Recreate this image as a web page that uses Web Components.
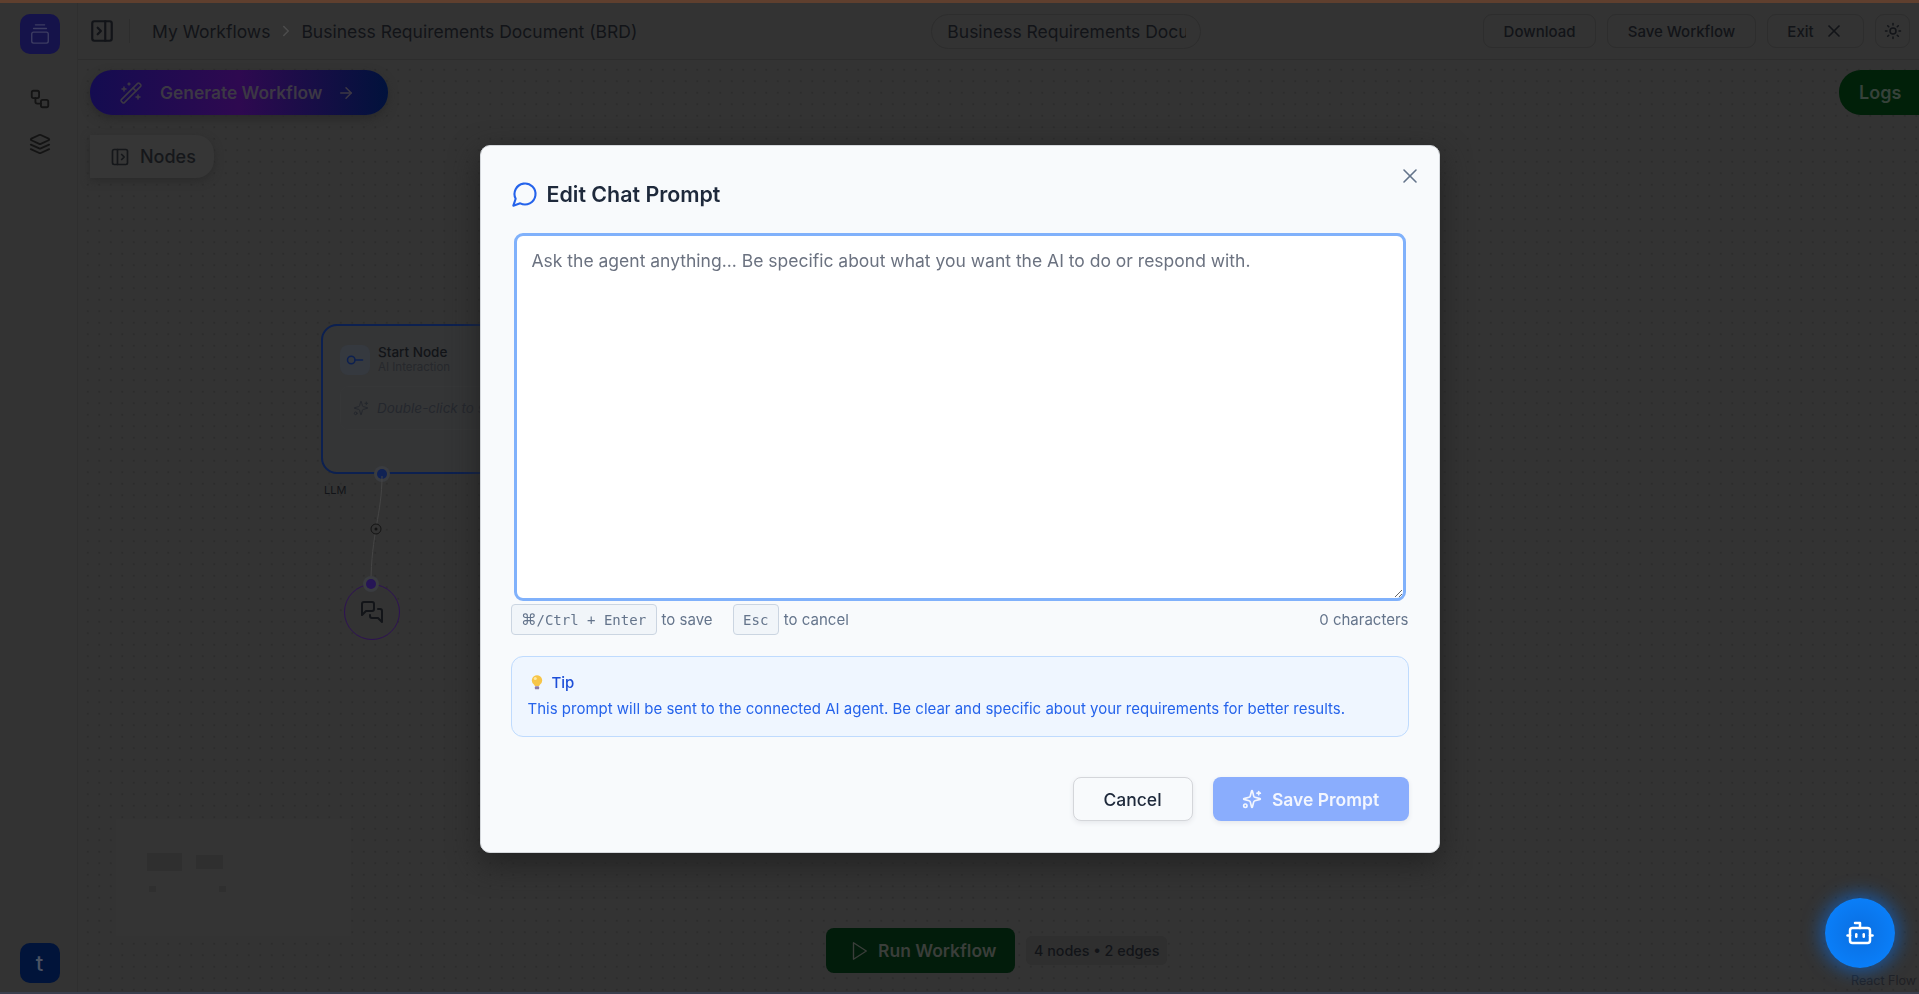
<!DOCTYPE html>
<html lang="en">
<head>
<meta charset="utf-8">
<title>Edit Chat Prompt</title>
<style>
    html, body { margin: 0; height: 100%; overflow: hidden; background: #333; font-family: Inter, "Liberation Sans", sans-serif; }
</style>
</head>
<body>
<app-shell></app-shell>
<prompt-modal></prompt-modal>

<script>
const ICONS = {
    gallery: '<path d="M7 2h10"/><path d="M5 6h14"/><rect x="3" y="10" width="18" height="12" rx="2"/>',
    workflow: '<rect x="3" y="3" width="8" height="8" rx="2"/><path d="M7 11v4a2 2 0 0 0 2 2h4"/><rect x="13" y="13" width="8" height="8" rx="2"/>',
    layers: '<path d="m12.83 2.18a2 2 0 0 0-1.66 0L2.6 6.08a1 1 0 0 0 0 1.83l8.58 3.91a2 2 0 0 0 1.66 0l8.58-3.9a1 1 0 0 0 0-1.83Z"/><path d="m22 17.65-9.17 4.16a2 2 0 0 1-1.66 0L2 17.65"/><path d="m22 12.65-9.17 4.16a2 2 0 0 1-1.66 0L2 12.65"/>',
    panelright: '<rect x="3" y="3" width="18" height="18" rx="2"/><path d="M15 3v18"/><path d="m8 9 3 3-3 3"/>',
    panelleft: '<rect x="3" y="3" width="18" height="18" rx="2"/><path d="M9 3v18"/><path d="m14 9 3 3-3 3"/>',
    chevron: '<path d="m9 18 6-6-6-6"/>',
    x: '<path d="M18 6 6 18"/><path d="m6 6 12 12"/>',
    sun: '<circle cx="12" cy="12" r="4"/><path d="M12 2v2"/><path d="M12 20v2"/><path d="m4.93 4.93 1.41 1.41"/><path d="m17.66 17.66 1.41 1.41"/><path d="M2 12h2"/><path d="M20 12h2"/><path d="m6.34 17.66-1.41 1.41"/><path d="m19.07 4.93-1.41 1.41"/>',
    wand: '<path d="m21.64 3.64-1.28-1.28a1.21 1.21 0 0 0-1.72 0L2.36 18.64a1.21 1.21 0 0 0 0 1.72l1.28 1.28a1.2 1.2 0 0 0 1.72 0L21.64 5.36a1.2 1.2 0 0 0 0-1.72"/><path d="m14 7 3 3"/><path d="M5 6v4"/><path d="M19 14v4"/><path d="M10 2v2"/><path d="M7 8H3"/><path d="M21 16h-4"/><path d="M11 3H9"/>',
    arrow: '<path d="M5 12h14"/><path d="m12 5 7 7-7 7"/>',
    message: '<path d="M7.9 20A9 9 0 1 0 4 16.1L2 22Z"/>',
    messages: '<path d="M14 9a2 2 0 0 1-2 2H6l-4 4V4a2 2 0 0 1 2-2h8a2 2 0 0 1 2 2z"/><path d="M18 9h2a2 2 0 0 1 2 2v11l-4-4h-6a2 2 0 0 1-2-2v-1"/>',
    sparkles: '<path d="M9.937 15.5A2 2 0 0 0 8.5 14.063l-6.135-1.582a.5.5 0 0 1 0-.962L8.5 9.936A2 2 0 0 0 9.937 8.5l1.582-6.135a.5.5 0 0 1 .963 0L14.063 8.5A2 2 0 0 0 15.5 9.937l6.135 1.581a.5.5 0 0 1 0 .964L15.5 14.063a2 2 0 0 0-1.437 1.437l-1.582 6.135a.5.5 0 0 1-.963 0z"/><path d="M20 3v4"/><path d="M22 5h-4"/><circle cx="4" cy="20" r="2"/>',
    bot: '<path d="M12 8V4H8"/><rect x="4" y="8" width="16" height="12" rx="2"/><path d="M2 14h2"/><path d="M20 14h2"/><path d="M15 13v2"/><path d="M9 13v2"/>',
    play: '<polygon points="6 3 20 12 6 21 6 3"/>',
    key: '<circle cx="7" cy="12" r="5"/><path d="M12 12h10"/>'
};

class XIcon extends HTMLElement {
    connectedCallback() {
        const size = this.getAttribute('size') || 24;
        const width = this.getAttribute('stroke') || 2;
        this.attachShadow({ mode: 'open' }).innerHTML = `
            <style>:host{display:inline-flex;flex:none;width:${size}px;height:${size}px} svg{display:block}</style>
            <svg width="${size}" height="${size}" viewBox="0 0 24 24" fill="none" stroke="currentColor" stroke-width="${width}" stroke-linecap="round" stroke-linejoin="round">${ICONS[this.getAttribute('name')]}</svg>
        `;
    }
}
customElements.define('x-icon', XIcon);

class AppShell extends HTMLElement {
    connectedCallback() {
        this.attachShadow({ mode: 'open' }).innerHTML = `
            <style>
                :host{display:flex;flex-direction:column;height:100vh;overflow:hidden;background:#333}
                .strip-top{height:3px;background:#5f3f2e;flex:none}
                .strip-bottom{height:2px;background:#3b3f4d;flex:none}
                .body{flex:1;display:flex;min-height:0}
                .main{flex:1;display:flex;flex-direction:column;min-width:0}
            </style>
            <div class="strip-top"></div>
            <div class="body">
                <app-sidebar></app-sidebar>
                <div class="main">
                    <app-header></app-header>
                    <flow-canvas></flow-canvas>
                </div>
            </div>
            <div class="strip-bottom"></div>
        `;
    }
}
customElements.define('app-shell', AppShell);

class AppSidebar extends HTMLElement {
    connectedCallback() {
        this.attachShadow({ mode: 'open' }).innerHTML = `
            <style>
                :host{display:flex;flex-direction:column;align-items:center;width:78px;flex:none;box-sizing:border-box;border-right:1px solid #2f2f2f;padding:11px 0 9px 2px;color:#141414}
                .logo{width:40px;height:40px;border-radius:10px;background:#15134a;color:#3d3d62;display:flex;align-items:center;justify-content:center}
                nav{display:flex;flex-direction:column;gap:23px;margin-top:34px}
                .avatar{margin-top:auto;width:40px;height:40px;border-radius:10px;background:#01143a;color:#4a5262;display:flex;align-items:center;justify-content:center;font:500 22px Inter,sans-serif}
            </style>
            <div class="logo"><x-icon name="gallery" size="22" stroke="1.5"></x-icon></div>
            <nav>
                <x-icon name="workflow" size="22"></x-icon>
                <x-icon name="layers" size="22"></x-icon>
            </nav>
            <div class="avatar">t</div>
        `;
    }
}
customElements.define('app-sidebar', AppSidebar);

class HeaderButton extends HTMLElement {
    connectedCallback() {
        this.attachShadow({ mode: 'open' }).innerHTML = `
            <style>
                :host{display:inline-flex;align-items:center;justify-content:center;gap:10px;height:34px;box-sizing:border-box;border:1px solid #2d2d2d;border-radius:9px;font:500 15px Inter,sans-serif;color:#121418}
            </style>
            <slot></slot>
        `;
    }
}
customElements.define('header-button', HeaderButton);

class AppHeader extends HTMLElement {
    connectedCallback() {
        this.attachShadow({ mode: 'open' }).innerHTML = `
            <style>
                :host{display:flex;align-items:center;height:57px;flex:none;box-sizing:border-box;border-bottom:1px solid #2d2d2d;padding:0 9px 0 11px;color:#121418}
                .divider{width:1px;height:24px;background:#2d2d2d;margin:0 22px 0 14px}
                .crumbs{display:flex;align-items:center;font-size:17.5px;white-space:nowrap}
                .crumbs x-icon{margin:0 6.5px;color:#4d4d4d}
                .title{margin-left:294px;width:270px;height:35px;box-sizing:border-box;border:1px solid #2d2d2d;border-radius:18px;padding:0 14px 0 15px;display:flex;align-items:center;font-size:17.5px;white-space:nowrap}
                .title span{display:block;overflow:hidden}
                .actions{margin-left:auto;display:flex;gap:11px}
                .dl{width:113px} .save{width:149px} .exit{width:97px} .theme{width:35px}
            </style>
            <x-icon name="panelright" size="26"></x-icon>
            <div class="divider"></div>
            <div class="crumbs">My Workflows<x-icon name="chevron" size="18"></x-icon>Business Requirements Document (BRD)</div>
            <div class="title"><span>Business Requirements Document (BRD)</span></div>
            <div class="actions">
                <header-button class="dl">Download</header-button>
                <header-button class="save">Save Workflow</header-button>
                <header-button class="exit">Exit <x-icon name="x" size="20"></x-icon></header-button>
                <header-button class="theme"><x-icon name="sun" size="18"></x-icon></header-button>
            </div>
        `;
    }
}
customElements.define('app-header', AppHeader);

class StartNode extends HTMLElement {
    connectedCallback() {
        this.attachShadow({ mode: 'open' }).innerHTML = `
            <style>
                :host{position:absolute;left:243px;top:264px;width:300px;height:150px;box-sizing:border-box;border:2px solid #0c2050;border-radius:16px;background:#343536;padding:19px 17px}
                .top{display:flex;gap:8px;align-items:center}
                .badge{width:30px;height:30px;border-radius:8px;background:#35393f;color:#0c2050;display:flex;align-items:center;justify-content:center}
                .name{font:500 13.5px/16px Inter,sans-serif;color:#121418;margin-top:-1px}
                .sub{font:400 11.5px/15px Inter,sans-serif;color:#26282c}
                .prompt{margin-top:11px;height:44px;box-sizing:border-box;border:1px solid #363738;border-radius:8px;display:flex;align-items:center;gap:8px;padding-left:12px;font:italic 400 13.5px Inter,sans-serif;color:#24272d;white-space:nowrap}
                .handle{position:absolute;left:54px;bottom:-7px;width:10px;height:10px;border-radius:50%;background:#102254;box-shadow:0 0 0 3px #3a3c40}
            </style>
            <div class="top">
                <div class="badge"><x-icon name="key" size="18"></x-icon></div>
                <div><div class="name">Start Node</div><div class="sub">AI Interaction</div></div>
            </div>
            <div class="prompt"><x-icon name="sparkles" size="16" stroke="1.5"></x-icon>Double-click to set prompt</div>
            <div class="handle"></div>
        `;
    }
}
customElements.define('start-node', StartNode);

class ChatNode extends HTMLElement {
    connectedCallback() {
        this.attachShadow({ mode: 'open' }).innerHTML = `
            <style>
                :host{position:absolute;left:266px;top:524px;width:56px;height:56px;box-sizing:border-box;border:1.5px solid #2e1154;border-radius:50%;background:#333;color:#121418;display:flex;align-items:center;justify-content:center}
                .handle{position:absolute;left:20.5px;top:-6px;width:10px;height:10px;border-radius:50%;background:#261556;box-shadow:0 0 0 3px #3a3c40}
            </style>
            <x-icon name="messages" size="24"></x-icon>
            <div class="handle"></div>
        `;
    }
}
customElements.define('chat-node', ChatNode);

class MiniMap extends HTMLElement {
    connectedCallback() {
        this.attachShadow({ mode: 'open' }).innerHTML = `
            <style>
                :host{position:absolute;left:38px;top:759px;width:235px;height:117px;background:#343434}
                i{position:absolute;background:#2f2f2f}
            </style>
            <i style="left:31px;top:34px;width:35px;height:18px"></i>
            <i style="left:80px;top:36px;width:27px;height:14px"></i>
            <i style="left:33px;top:67px;width:7px;height:6px"></i>
            <i style="left:103px;top:67px;width:7px;height:6px"></i>
        `;
    }
}
customElements.define('mini-map', MiniMap);

class FlowCanvas extends HTMLElement {
    connectedCallback() {
        this.attachShadow({ mode: 'open' }).innerHTML = `
            <style>
                :host{display:block;flex:1;position:relative;overflow:hidden;background-color:#333;background-image:radial-gradient(circle,#2a2a2a .6px,transparent .9px);background-size:11.5px 11.5px;background-position:4px 4px}
                .gen,.nodes,.logs,.run,.chip,.llm,.fab,.rf{position:absolute;white-space:nowrap;display:flex;align-items:center}
                .gen{left:12px;top:10px;width:298px;height:45px;box-sizing:border-box;padding-left:29px;gap:17px;border-radius:22px;background:linear-gradient(90deg,#140c50 0%,#2e0950 50%,#01123c 100%);box-shadow:0 4px 10px #2a2a2a;color:#3c3844;font:600 17.4px Inter,sans-serif}
                .gen x-icon:last-child{margin-left:-2px}
                .nodes{left:12px;top:75px;width:124px;height:43px;box-sizing:border-box;padding-left:20px;gap:10px;border-radius:0 18px 18px 0;background:#363636;box-shadow:0 3px 8px #2b2b2b;color:#15171a;font:500 18px Inter,sans-serif}
                .logs{right:0;top:10px;width:80px;height:45px;box-sizing:border-box;padding-left:20px;border-radius:22px 0 0 22px;background:#012009;color:#36423a;font:600 18px Inter,sans-serif}
                .run{left:748px;top:868px;width:189px;height:45px;box-sizing:border-box;padding-left:22px;gap:8px;border-radius:8px;background:#021c0b;color:#3a3e3a;font:600 17.5px Inter,sans-serif}
                .chip{left:948px;top:876px;height:29px;box-sizing:border-box;padding:0 8px;border-radius:6px;background:#2f2f2f;color:#121418;font:500 14.3px Inter,sans-serif}
                .llm{left:246px;top:423px;font:400 11px Inter,sans-serif;color:#121418}
                .edge{position:absolute;left:280px;top:414px}
                .fab{right:24px;top:838px;width:70px;height:70px;border-radius:50%;justify-content:center;background:radial-gradient(circle,#0a6ee0 0%,#0a7ef8 70%);color:#fff;box-shadow:0 0 18px 4px rgba(10,110,230,.6)}
                .rf{right:3px;top:913px;font:400 12.5px Inter,sans-serif;color:#1f2024}
            </style>
            <div class="gen"><x-icon name="wand" size="24" stroke="1.5"></x-icon>Generate Workflow<x-icon name="arrow" size="18"></x-icon></div>
            <div class="nodes"><x-icon name="panelleft" size="20"></x-icon>Nodes</div>
            <div class="logs">Logs</div>
            <start-node></start-node>
            <div class="llm">LLM</div>
            <svg class="edge" width="40" height="115" viewBox="0 0 40 115" fill="none">
                <path d="M24 2 C24 40 13 60 13 110" stroke="#454545" stroke-width="1"/>
                <circle cx="18" cy="55" r="5" fill="#333" stroke="#141414" stroke-width="1"/>
                <circle cx="18" cy="55" r="1.5" fill="#141414"/>
            </svg>
            <chat-node></chat-node>
            <mini-map></mini-map>
            <div class="run"><x-icon name="play" size="22" stroke="1.5"></x-icon>Run Workflow</div>
            <div class="chip">4 nodes • 2 edges</div>
            <div class="rf">React Flow</div>
            <div class="fab"><x-icon name="bot" size="30"></x-icon></div>
        `;
    }
}
customElements.define('flow-canvas', FlowCanvas);

class KeyHint extends HTMLElement {
    connectedCallback() {
        this.attachShadow({ mode: 'open' }).innerHTML = `
            <style>
                :host{display:inline-flex;align-items:center;gap:5px;font:400 15px Inter,sans-serif;color:#64748b}
                kbd{display:flex;align-items:center;height:31px;box-sizing:border-box;padding:0 9.5px;background:#f1f5f9;border:1px solid #cbd5e1;border-radius:4px;font:400 14px "DejaVu Sans Mono",monospace;color:#64748b}
            </style>
            <kbd><slot name="key"></slot></kbd><slot></slot>
        `;
    }
}
customElements.define('key-hint', KeyHint);

class PromptModal extends HTMLElement {
    connectedCallback() {
        this.attachShadow({ mode: 'open' }).innerHTML = `
            <style>
                :host{position:fixed;inset:0;display:flex;justify-content:center;align-items:flex-start;padding-top:145px;box-sizing:border-box;backdrop-filter:blur(.6px)}
                .dialog{position:relative;width:960px;box-sizing:border-box;padding:31px 30px;background:#f8fafc;border:1px solid #d5d8dc;border-radius:10px;box-shadow:0 10px 30px #222;font-family:Inter,sans-serif}
                .title{display:flex;align-items:center;gap:8px;height:34px;margin:0;font:600 21.4px Inter,sans-serif;color:#1e293b}
                .title x-icon{color:#2563eb}
                .close{position:absolute;right:17px;top:18px;color:#64748b}
                .field{margin-top:19px;padding:3px}
                textarea{display:block;width:100%;height:368px;box-sizing:border-box;padding:13px 15px;background:#fff;border:3px solid #80b1fb;border-radius:9px;outline:none;resize:vertical;font:400 17.5px/24px Inter,sans-serif;color:#1e293b}
                textarea::placeholder{color:#6b7280;opacity:1}
                .hints{display:flex;align-items:center;gap:20px;height:31px;font-size:15px;color:#64748b}
                .count{margin-left:auto}
                .tip{margin-top:21px;height:81px;box-sizing:border-box;padding:13px 16px;background:#eff6ff;border:1px solid #bfdbfe;border-radius:12px}
                .tip-head{display:flex;align-items:center;gap:9px;height:24px;padding-left:3px;font:500 15px Inter,sans-serif;color:#1d4ed8}
                .tip p{margin:5px 0 0;font:400 15px/20px Inter,sans-serif;color:#2563eb}
                .actions{margin-top:40px;display:flex;justify-content:flex-end;gap:20px}
                button{height:44px;box-sizing:border-box;border-radius:8px;font:500 17.5px Inter,sans-serif;display:flex;align-items:center;justify-content:center;gap:10px;padding:0}
                .cancel{width:120px;background:#f8fafc;border:1px solid #d4d6da;color:#1e293b;box-shadow:0 2px 5px #e6e8ec}
                .save{width:196px;background:#8aadfd;border:0;color:#f3f6fe;font-weight:600;box-shadow:0 2px 5px #e6e8ec}
            </style>
            <div class="dialog" role="dialog">
                <h2 class="title"><x-icon name="message" size="28" stroke="1.8"></x-icon>Edit Chat Prompt</h2>
                <x-icon class="close" name="x" size="24" stroke="1.6"></x-icon>
                <div class="field"><textarea placeholder="Ask the agent anything... Be specific about what you want the AI to do or respond with."></textarea></div>
                <div class="hints">
                    <key-hint><span slot="key" style="display:flex;align-items:center"><span style="font:400 15.5px 'DejaVu Sans',sans-serif">⌘</span>/Ctrl + Enter</span>to save</key-hint>
                    <key-hint><span slot="key">Esc</span>to cancel</key-hint>
                    <span class="count">0 characters</span>
                </div>
                <div class="tip">
                    <div class="tip-head">
                        <svg width="12" height="16" viewBox="0 0 14 18"><path d="M7 1a6 6 0 0 0-3.6 10.800c.6.5.9 1.200 1 2h5.200c.1-.8.4-1.500 1-2A6 6 0 0 0 7 1z" fill="#f7c548"/><circle cx="5" cy="5" r="1.800" fill="#ffe9a0"/><rect x="4.500" y="14" width="5" height="3.500" rx="1" fill="#8d7ba8"/></svg>
                        Tip
                    </div>
                    <p>This prompt will be sent to the connected AI agent. Be clear and specific about your requirements for better results.</p>
                </div>
                <div class="actions">
                    <button class="cancel">Cancel</button>
                    <button class="save" disabled><x-icon name="sparkles" size="20"></x-icon>Save Prompt</button>
                </div>
            </div>
        `;
    }
}
customElements.define('prompt-modal', PromptModal);
</script>
</body>
</html>
